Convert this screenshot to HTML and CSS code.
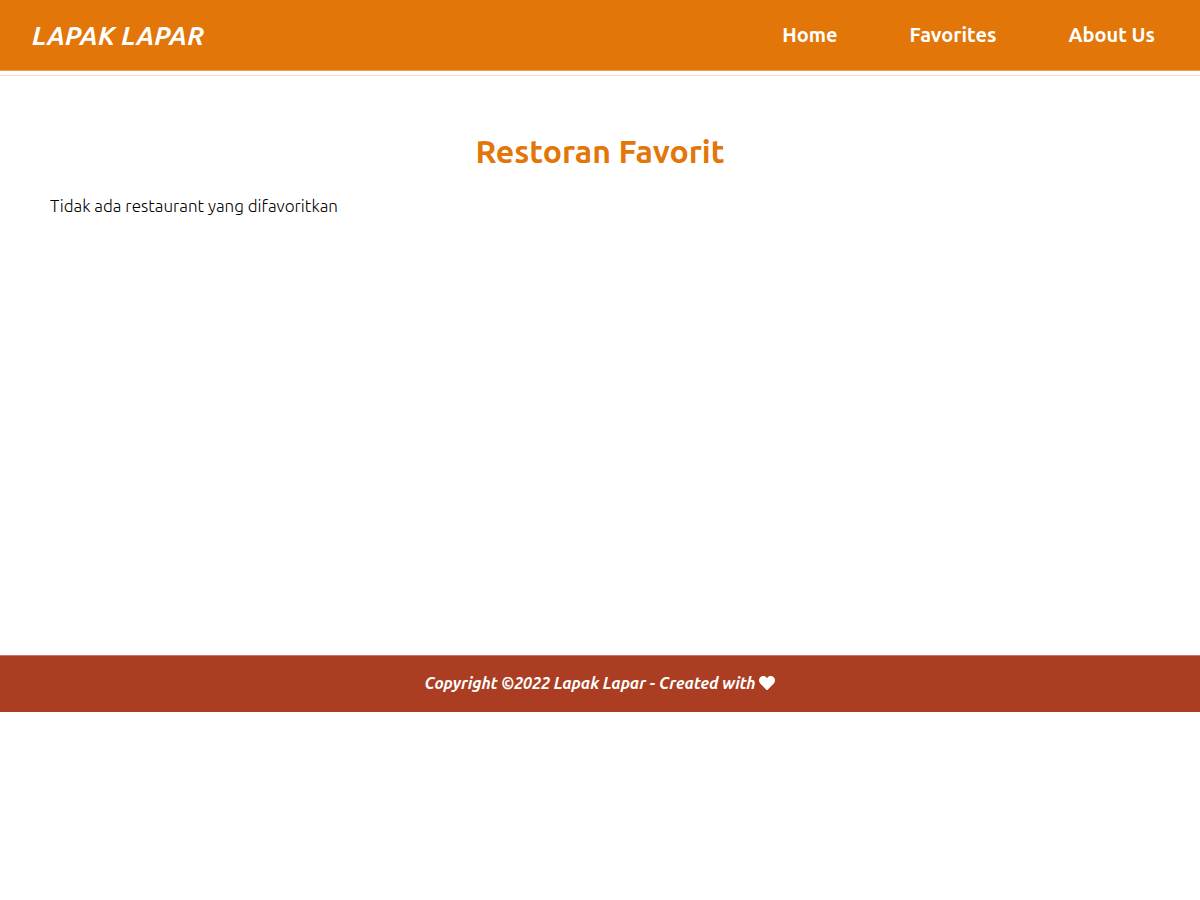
FILE: index.html
```html
<!DOCTYPE html>
<html lang="id">
<head>
<meta charset="utf-8">
<meta name="viewport" content="width=device-width, initial-scale=1">
<title>Lapak Lapar</title>
<link rel="stylesheet" href="styles.css">
</head>
<body>
<header class="site-header">
  <div class="bar">
    <h1 class="brand">LAPAK LAPAR</h1>
    <nav class="nav">
      <a href="#home">Home</a>
      <a href="#favorites">Favorites</a>
      <a href="#about">About Us</a>
    </nav>
  </div>
</header>
<main class="content">
  <h2 class="title">Restoran Favorit</h2>
  <p class="empty">Tidak ada restaurant yang difavoritkan</p>
</main>
<footer class="footer">
  <p class="copyright">Copyright ©2022 Lapak Lapar - Created with</p>
  <svg class="heart" viewBox="0 0 512 512" aria-hidden="true"><path fill="currentColor" d="M462.3 62.6C407.5 15.9 326 24.3 275.7 76.2L256 96.5l-19.7-20.3C186.1 24.3 104.5 15.9 49.7 62.6c-62.8 53.6-66.1 149.8-9.9 207.9l193.5 199.8c12.5 12.9 32.8 12.9 45.3 0l193.5-199.8c56.3-58.1 53-154.3-9.8-207.9z"/></svg>
</footer>
</body>
</html>
```
FILE: styles.css
```css
* {
  box-sizing: border-box;
}

body {
  margin: 0;
  background: #fff;
  color: #000;
  font-family: Ubuntu, "Noto Sans", sans-serif;
}

.site-header {
  padding-bottom: 4px;
  border-bottom: 1px solid #f6dcd0;
}

.bar {
  display: flex;
  align-items: center;
  justify-content: space-between;
  min-height: 71px;
  padding: 0 45px 0 32px;
  border-bottom: 1px solid #eaa055;
  background: #e27609;
  color: #fff;
}

.brand {
  margin: 0;
  font-size: 26px;
  font-style: italic;
  font-weight: 700;
}

.nav {
  display: flex;
  gap: 72px;
  padding-bottom: 2px;
}

.nav a {
  color: inherit;
  font-size: 20px;
  font-weight: 700;
  text-decoration: none;
}

.content {
  min-height: 579px;
  padding: 53px 50px 0;
}

.title {
  margin: 0;
  color: #e27609;
  font-size: 32px;
  font-weight: 700;
  line-height: 44px;
  text-align: center;
}

.empty {
  margin: 21px 0 0;
  font-size: 17px;
  font-weight: 300;
  line-height: 24px;
}

.footer {
  display: flex;
  align-items: center;
  justify-content: center;
  gap: 4px;
  min-height: 57px;
  padding: 15px 16px 17px;
  border-top: 1px solid #c67866;
  background: #ab3e22;
  color: #fff;
}

.copyright {
  margin: 0;
  font-size: 16px;
  font-style: italic;
  font-weight: 700;
  line-height: 24px;
}

.heart {
  width: 16px;
  height: 16px;
}
```
